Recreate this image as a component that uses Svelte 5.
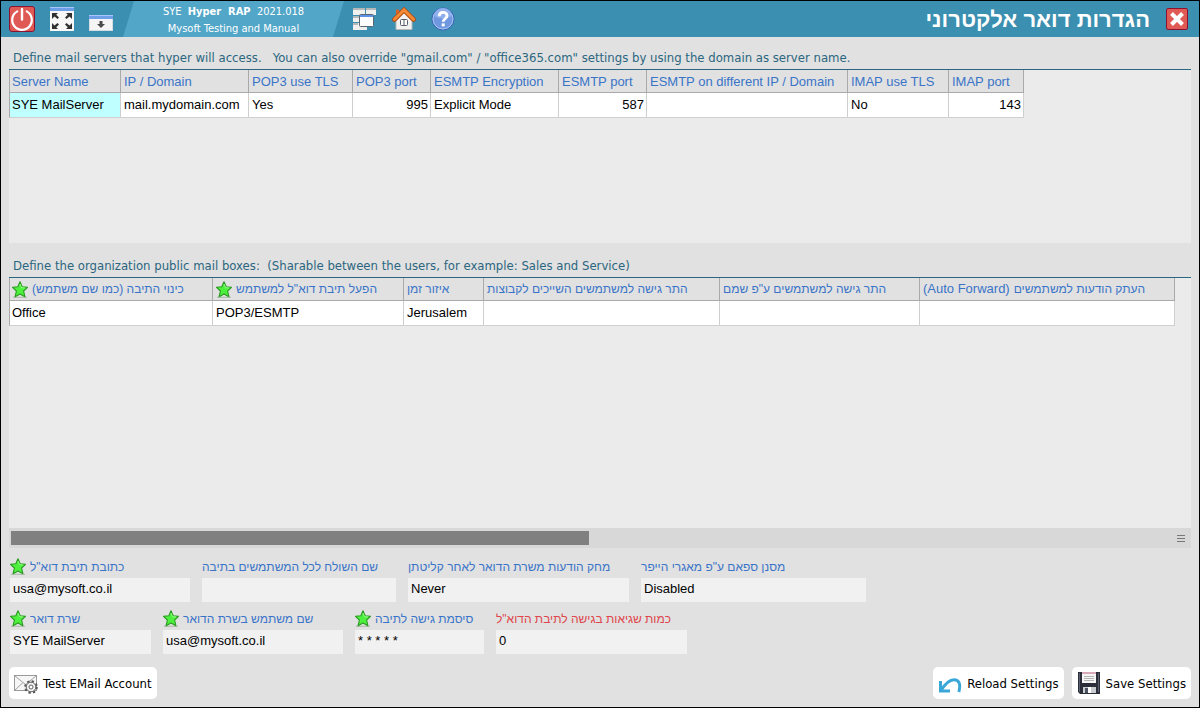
<script lang="ts">
  type Column = { label: string; note?: string; width: number; required?: boolean; numeric?: boolean };
  type Field = { id: string; label: string; value: string; width: number; required?: boolean; alert?: boolean };

  const serverColumns: Column[] = [
    { label: 'Server Name', width: 111 },
    { label: 'IP / Domain', width: 128 },
    { label: 'POP3 use TLS', width: 104 },
    { label: 'POP3 port', width: 78, numeric: true },
    { label: 'ESMTP Encryption', width: 128 },
    { label: 'ESMTP port', width: 88, numeric: true },
    { label: 'ESMTP on different IP / Domain', width: 201 },
    { label: 'IMAP use TLS', width: 101 },
    { label: 'IMAP port', width: 75, numeric: true },
  ];

  const servers = [['SYE MailServer', 'mail.mydomain.com', 'Yes', '995', 'Explicit Mode', '587', '', 'No', '143']];

  const boxColumns: Column[] = [
    { label: 'כינוי התיבה (כמו שם משתמש)', width: 203, required: true },
    { label: 'הפעל תיבת דוא"ל למשתמש', width: 191, required: true },
    { label: 'איזור זמן', width: 80 },
    { label: 'התר גישה למשתמשים השייכים לקבוצות', width: 236 },
    { label: 'התר גישה למשתמשים ע"פ שמם', width: 200 },
    { label: 'העתק הודעות למשתמשים', note: '(Auto Forward)', width: 255 },
  ];

  const boxes = [['Office', 'POP3/ESMTP', 'Jerusalem', '', '', '']];

  let fieldRows: Field[][] = $state([
    [
      { id: 'address', label: 'כתובת תיבת דוא"ל', value: 'usa@mysoft.co.il', width: 180, required: true },
      { id: 'sender', label: 'שם השולח לכל המשתמשים בתיבה', value: '', width: 194 },
      { id: 'delete', label: 'מחק הודעות משרת הדואר לאחר קליטתן', value: 'Never', width: 221 },
      { id: 'spam', label: 'מסנן ספאם ע"פ מאגרי הייפר', value: 'Disabled', width: 225 },
    ],
    [
      { id: 'server', label: 'שרת דואר', value: 'SYE MailServer', width: 141, required: true },
      { id: 'user', label: 'שם משתמש בשרת הדואר', value: 'usa@mysoft.co.il', width: 180, required: true },
      { id: 'password', label: 'סיסמת גישה לתיבה', value: '* * * * *', width: 129, required: true },
      { id: 'errors', label: 'כמות שגיאות בגישה לתיבת הדוא"ל', value: '0', width: 191, alert: true },
    ],
  ]);

  const total = (columns: Column[]) => columns.reduce((sum, c) => sum + c.width, 1);
</script>

{#snippet star()}
  <svg class="star" width="16" height="17" viewBox="0 0 16 17" aria-hidden="true">
    <path d="M1 16.3h14" stroke="#a9b8a6" stroke-width="1" />
    <path
      d="M8 .8 10.2 5.7 15.5 6.3 11.6 10 12.9 15.7 8 12.9 3.1 15.7 4.4 10 .5 6.3 5.8 5.7Z"
      fill="#4df03c"
      stroke="#2b9a22"
      stroke-width="1.1"
      stroke-linejoin="round"
    />
    <path d="M8 3 9.5 6.6 13 7" fill="none" stroke="#a4ff98" stroke-width=".8" />
  </svg>
{/snippet}

{#snippet grid(columns: Column[], rows: string[][], active: number)}
  <table style:width="{total(columns)}px">
    <colgroup>
      {#each columns as column, i}
        <col style:width="{column.width + (i === 0 ? 1 : 0)}px" />
      {/each}
    </colgroup>
    <thead>
      <tr>
        {#each columns as column}
          <th scope="col">
            <span class="label">
              {#if column.required}{@render star()}{/if}
              {#if column.note}<span class="note">{column.note}</span>{/if}
              <bdi>{column.label}</bdi>
            </span>
          </th>
        {/each}
      </tr>
    </thead>
    <tbody>
      {#each rows as row}
        <tr>
          {#each row as cell, i}
            <td class:numeric={columns[i].numeric} class:active={i === active}>{cell}</td>
          {/each}
        </tr>
      {/each}
    </tbody>
  </table>
{/snippet}

<div class="window">
  <header>
    <button class="tool" aria-label="Exit">
      <svg width="26" height="26" viewBox="0 0 26 26">
        <rect x=".5" y=".5" width="25" height="25" rx="2.5" fill="#e05a55" stroke="#8c1230" />
        <path d="M8.3 5.4a9.8 9.8 0 1 0 9.4 0" fill="none" stroke="#fff" stroke-width="2.2" stroke-linecap="round" />
        <path d="M13 3v10.5" stroke="#fff" stroke-width="2.4" stroke-linecap="round" />
      </svg>
    </button>
    <button class="tool" aria-label="Full screen">
      <svg width="24" height="24" viewBox="0 0 24 24">
        <rect width="24" height="24" fill="#f7f7f7" />
        <rect width="24" height="4" fill="#6f9fe8" />
        <path d="M0 .5h24" stroke="#a9c8f8" />
        <path
          d="M2 6h6L6.2 7.8 9 10.5 7.5 12 4.5 9.5 2 12ZM22 6h-6l1.8 1.8L15 10.5 16.5 12l3-2.5L22 12ZM2 22h6l-1.8-1.8L9 17.5 7.5 16l-3 2.5L2 16ZM22 22h-6l1.8-1.8L15 17.5 16.5 16l3 2.5L22 16Z"
          fill="#303030"
        />
      </svg>
    </button>
    <button class="tool low" aria-label="Minimize">
      <svg width="24" height="16" viewBox="0 0 24 16">
        <rect x=".5" y=".5" width="23" height="15" fill="#f5f5f5" stroke="#d7dce2" />
        <rect width="24" height="4" fill="#6f9fe8" />
        <path d="M0 .5h24" stroke="#a9c8f8" />
        <path d="M10.5 6h3v3H16l-4 4-4-4h2.5Z" fill="#4a4a4a" />
      </svg>
    </button>

    <div class="product">
      <span>SYE&nbsp; <b>Hyper&nbsp; RAP</b>&nbsp; 2021.018</span>
      <span>Mysoft Testing and Manual</span>
    </div>

    <button class="tool" aria-label="Windows">
      <svg width="24" height="24" viewBox="0 0 24 24">
        <g fill="#f0f0ee">
          <rect y="1" width="12" height="7" />
          <rect x="13" y="1" width="10" height="7" />
          <rect y="9" width="6" height="6" />
          <rect y="16" width="14" height="7" />
        </g>
        <path d="M0 2h12M13 2h10M0 10h6M0 17h5" stroke="#b4b8b8" stroke-width="2" />
        <rect x="6.5" y="7.5" width="14" height="12" rx="1" fill="#fff" stroke="#5b6770" />
        <path d="M7 9h13" stroke="#5f92e6" stroke-width="2" />
      </svg>
    </button>
    <button class="tool" aria-label="Home">
      <svg width="24" height="24" viewBox="0 0 24 24">
        <path d="M4 2.5h3V7H4Z" fill="#d9642b" />
        <path d="M4 12 12 4l8 8v10.5H4Z" fill="#f2f2f2" stroke="#b7b7b7" />
        <path d="M2.5 12.5 12 3l9.5 9.5" fill="none" stroke="#b04a12" stroke-width="4.6" stroke-linecap="round" />
        <path d="M2.5 12.3 12 2.9l9.5 9.4" fill="none" stroke="#f58a35" stroke-width="3" stroke-linecap="round" />
        <rect x="8.5" y="12.5" width="7" height="6" rx="1" fill="#fff" stroke="#5c5c66" />
        <path d="M12 12v7" stroke="#5c5c66" />
      </svg>
    </button>
    <button class="tool" aria-label="Help">
      <svg width="24" height="24" viewBox="0 0 24 24">
        <circle cx="12" cy="12" r="11" fill="#6e97e0" stroke="#3561b3" />
        <circle cx="12" cy="12" r="10" fill="none" stroke="#bcd2f7" stroke-width=".8" />
        <path d="M3 9a9 8 0 0 1 18 0q-9 5-18 0Z" fill="#8fb0ec" />
        <path d="M8.2 9.2c0-5 7.8-5 7.8-.4 0 3-3.8 2.9-3.8 6" fill="none" stroke="#fff" stroke-width="2.8" />
        <rect x="10.7" y="16.4" width="3" height="3" fill="#fff" />
      </svg>
    </button>

    <h1 dir="rtl">הגדרות דואר אלקטרוני</h1>
    <button class="tool" aria-label="Close">
      <svg width="22" height="22" viewBox="0 0 22 22">
        <rect x=".5" y=".5" width="21" height="21" rx="1.5" fill="#e05a55" stroke="#8c1230" />
        <path d="m5.5 5.5 11 11M16.5 5.5l-11 11" stroke="#fff" stroke-width="4" />
      </svg>
    </button>
  </header>

  <main>
    <p class="caption">
      Define mail servers that hyper will access. &nbsp; You can also override "gmail.com" / "office365.com" settings by
      using the domain as server name.
    </p>
    <section class="panel servers">
      {@render grid(serverColumns, servers, 0)}
    </section>

    <p class="caption">
      Define the organization public mail boxes: &nbsp;(Sharable between the users, for example: Sales and Service)
    </p>
    <section class="panel boxes">
      {@render grid(boxColumns, boxes, -1)}
    </section>
    <div class="scroll">
      <div class="thumb"></div>
      <svg width="8" height="7" viewBox="0 0 8 7" aria-hidden="true">
        <path d="M0 .5h8M0 3.5h8M0 6.5h8" stroke="#777" />
      </svg>
    </div>

    <form>
      {#each fieldRows as row}
        <div class="fields">
          {#each row as field}
            <div class="field" style:width="{field.width}px">
              <label class="label" class:alert={field.alert} for={field.id}>
                {#if field.required}{@render star()}{/if}
                <bdi>{field.label}</bdi>
              </label>
              <input id={field.id} type="text" bind:value={field.value} />
            </div>
          {/each}
        </div>
      {/each}
    </form>

    <footer>
      <button class="action">
        <svg width="24" height="22" viewBox="0 0 24 22" aria-hidden="true">
          <rect x=".5" y="3.5" width="22" height="15" fill="#f6f6f6" stroke="#9a9a9a" />
          <path d="m1 4 10.5 8.5L22 4M1 18l8-7.5" fill="none" stroke="#a2a2a2" />
          <circle cx="17" cy="15" r="5.8" fill="none" stroke="#555" stroke-width="2" stroke-dasharray="2.3 2.25" />
          <circle cx="17" cy="15" r="4.8" fill="#f2f2f2" stroke="#606060" />
          <circle cx="17" cy="15" r="2" fill="#fff" stroke="#606060" />
        </svg>
        Test EMail Account
      </button>
      <span class="spacer"></span>
      <button class="action">
        <svg width="24" height="22" viewBox="0 0 24 22" aria-hidden="true">
          <path d="M2.5 9v10H12" fill="none" stroke="#3aa7d8" stroke-width="3" />
          <path d="M3 18.5C7 12 11.5 7.700 16 7.700c5 0 7 4.300 4.800 12.300" fill="none" stroke="#3aa7d8" stroke-width="3" />
        </svg>
        Reload Settings
      </button>
      <button class="action">
        <svg width="24" height="22" viewBox="0 0 24 22" aria-hidden="true">
          <path d="M1 0h22v22H3L1 20Z" fill="#2b2e38" />
          <path d="M2.5 1v19M21.5 1v19" stroke="#596070" />
          <rect x="5" width="14" height="11" fill="#f5f5f5" />
          <rect x="5" width="14" height="2" fill="#d9a9ba" />
          <path d="M7 4.5h10M7 6.5h10M7 8.5h10" stroke="#b4b4b4" />
          <rect x="6" y="15" width="13" height="6" fill="#c9cdd1" />
          <rect x="8" y="16" width="3" height="5" fill="#4d5360" />
          <rect x="11" y="15" width="3" height="6" fill="#fff" />
        </svg>
        Save Settings
      </button>
    </footer>
  </main>
</div>

<style>
  :global(body) {
    margin: 0;
  }

  .window {
    box-sizing: border-box;
    min-height: 100vh;
    display: flex;
    flex-direction: column;
    border: 1px solid #000;
    background: #e1e1e1;
    font-family: 'DejaVu Sans Condensed', 'DejaVu Sans', sans-serif;
    font-size: 13px;
    color: #000;
  }

  button {
    margin: 0;
    border: 0;
    font-family: inherit;
    cursor: pointer;
  }

  svg {
    display: block;
    flex-shrink: 0;
  }

  header {
    display: flex;
    align-items: center;
    height: 36px;
    padding: 0 11px 0 8px;
    background: #3b8fb0;
    color: #fff;
  }

  .tool {
    margin-right: 15px;
    padding: 0;
    background: none;
  }

  .tool.low {
    padding-top: 8px;
    margin-right: 10px;
  }

  .tool:last-child {
    margin-right: 0;
  }

  .product {
    display: flex;
    flex-direction: column;
    align-items: center;
    box-sizing: border-box;
    width: 221px;
    height: 36px;
    padding-top: 2px;
    margin-right: 9px;
    background: #52a6c8;
    clip-path: polygon(11px 0, 100% 0, calc(100% - 11px) 100%, 0 100%);
    font-size: 11px;
    line-height: 17px;
  }

  h1 {
    flex: 1;
    margin: 0 16px 0 0;
    padding-top: 2px;
    font-family: 'Liberation Sans', sans-serif;
    font-size: 22px;
    line-height: 32px;
    font-weight: 700;
  }

  main {
    flex: 1;
    display: flex;
    flex-direction: column;
    padding: 8px;
  }

  .caption {
    margin: 0;
    padding: 5px 4px 3px;
    line-height: 16px;
    color: #2b6680;
  }

  .servers + .caption {
    padding-top: 15px;
  }

  .panel {
    border-top: 1px solid #2b6680;
    background: #ebebeb;
    overflow: hidden;
  }

  .servers {
    flex: 173 0 0;
  }

  .boxes {
    flex: 250 0 0;
  }

  table {
    table-layout: fixed;
    border-collapse: separate;
    border-spacing: 0;
    font-family: 'Liberation Sans', sans-serif;
    font-size: 13px;
  }

  th,
  td {
    box-sizing: border-box;
    padding: 0 2px 0 3px;
    text-align: left;
    white-space: nowrap;
    font-weight: 400;
  }

  th {
    height: 23px;
    border-right: 1px solid #a9a9a9;
    border-bottom: 1px solid #a9a9a9;
    background: #e1e1e1;
  }

  .servers th {
    padding-top: 2px;
  }

  td {
    height: 25px;
    padding-bottom: 2px;
    border-right: 1px solid #cfcfcf;
    border-bottom: 1px solid #cfcfcf;
    background: #fff;
  }

  th:first-child,
  td:first-child {
    padding-left: 2px;
    border-left: 1px solid #a9a9a9;
  }

  td.numeric {
    text-align: right;
  }

  td.active {
    background: #c0ffff;
  }

  .label {
    display: flex;
    align-items: center;
    gap: 4px;
    font-family: 'Liberation Sans', sans-serif;
    font-size: 12px;
    line-height: 16px;
    white-space: nowrap;
    color: #3a74c8;
  }

  .servers .label,
  .note {
    font-size: 13px;
  }

  .label.alert {
    color: #e0454b;
  }

  .scroll {
    display: flex;
    align-items: center;
    justify-content: space-between;
    height: 20px;
    padding: 0 6px 0 2px;
    background: #d8d8d8;
  }

  .thumb {
    width: 49.2%;
    height: 14px;
    background: #808080;
  }

  form {
    display: flex;
    flex-direction: column;
    gap: 6px;
    padding: 8px 1px 13px;
  }

  .fields {
    display: flex;
    gap: 12px;
  }

  .field .label {
    height: 22px;
  }

  .field .star {
    margin-bottom: 2px;
  }

  input {
    box-sizing: border-box;
    width: 100%;
    height: 24px;
    display: block;
    padding: 0 3px 4px;
    border: 0;
    background: #f1f1f1;
    font-family: 'Liberation Sans', sans-serif;
    font-size: 13px;
    color: #000;
  }

  footer {
    display: flex;
    gap: 8px;
  }

  .spacer {
    flex: 1;
  }

  .action {
    display: flex;
    align-items: center;
    gap: 5px;
    height: 32px;
    padding: 0 5px;
    border-radius: 5px;
    background: #fff;
    font-size: 13px;
    white-space: nowrap;
    color: #000;
  }
</style>
